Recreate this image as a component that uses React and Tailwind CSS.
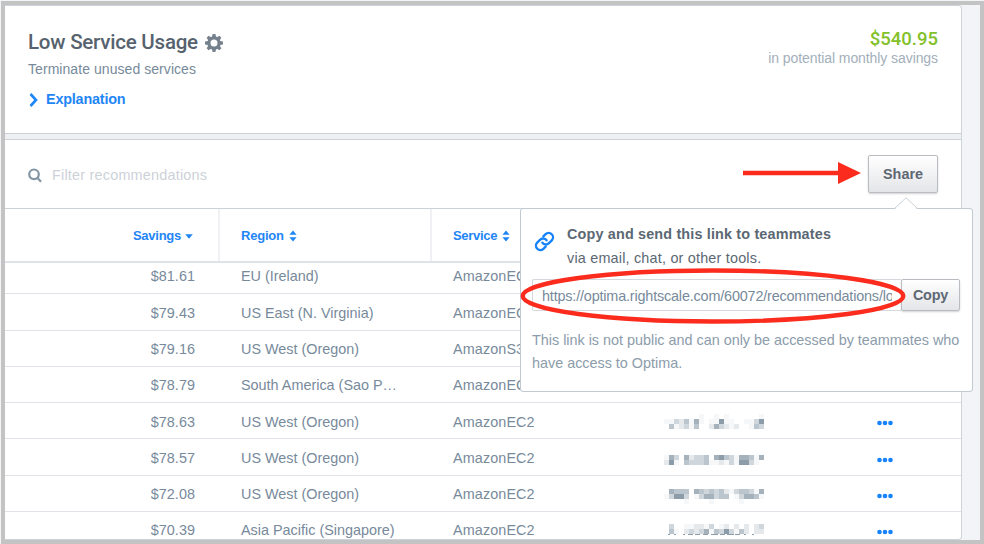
import React from "react";

const rows = [
  ["$81.61", "EU (Ireland)", "AmazonEC2"],
  ["$79.43", "US East (N. Virginia)", "AmazonEC2"],
  ["$79.16", "US West (Oregon)", "AmazonS3"],
  ["$78.79", "South America (Sao P…", "AmazonEC2"],
  ["$78.63", "US West (Oregon)", "AmazonEC2"],
  ["$78.57", "US West (Oregon)", "AmazonEC2"],
  ["$72.08", "US West (Oregon)", "AmazonEC2"],
  ["$70.39", "Asia Pacific (Singapore)", "AmazonEC2"],
];

// Redacted cells: each digit is a darkness level of one 5px block.
const mosaics = {
  4: { top: 2, grid: ["00000001001010000001", "11324151011611001136", "04123140025321200143"] },
  5: { top: 6, grid: ["15305233405643155415", "26104333411213166310"] },
  6: { top: 4, grid: ["05444054343421344315", "13663013553440135541", "00001000010000010000"] },
  7: { top: 3, grid: ["03001122130120202023", "04102323514363142022"] },
};
const shades = ["#fff", "#f5f7f8", "#e5e9ec", "#d0d7dc", "#bbc5cd", "#a5b2bc", "#8d9ca9"];
// Lower edges of the digits that remain visible under the last redaction: [x, width]
const digitFeet = [[4, 2], [10, 2], [19, 2], [24, 5], [31, 5], [39, 5], [47, 7], [56, 5], [63, 7], [71, 5], [80, 2], [88, 2]];

function Mosaic({ top, grid, feet }) {
  return (
    <svg width="100" height="20" className="block" shapeRendering="crispEdges">
      {grid.flatMap((line, y) =>
        [...line].map((v, x) =>
          v === "0" ? null : <rect key={`${x}-${y}`} x={x * 5} y={top + y * 5} width="5" height="5" fill={shades[+v]} />
        )
      )}
      {feet && digitFeet.map(([x, w]) => <rect key={x} x={x} y="13" width={w} height="1.4" fill="#8e9daa" />)}
    </svg>
  );
}

function Sort() {
  return (
    <svg width="8" height="12" viewBox="0 0 8 12" className="ml-[5px]" fill="#1f86f5">
      <path d="M4 0.5 7.6 4.8H0.4zM4 11.5 7.6 7.2H0.4z" />
    </svg>
  );
}

export default function App() {
  return (
    <div className="relative h-[544px] w-[984px] overflow-hidden bg-[#f2f4f5] pt-[1px] pl-[1px] font-['Liberation_Sans',Arial,sans-serif] text-[14.4px] text-[#778a9b]">
      <div className="h-[543px] w-[983px] overflow-hidden border-4 border-[#c3c3c3] bg-[#f3f4f7]">
        <div className="flex h-full w-[957px] flex-col overflow-hidden rounded-r-[4px] border-t border-r border-b border-[#cdd3da] bg-white">
          <header className="flex h-[127px] shrink-0 justify-between pr-[23px] pl-[23px]">
            <div>
              <div className="mt-[24px] flex h-[25px] items-center">
                <h1 className="w-[171px] font-['Roboto',sans-serif] text-[20.5px] font-medium tracking-[-0.22px] whitespace-nowrap text-[#56636e]">Low Service Usage</h1>
                <svg width="18" height="18" viewBox="-9 -9 18 18" className="ml-[6px]">
                  <circle r="5.1" fill="none" stroke="#75818c" strokeWidth="3.2" />
                  <g fill="#75818c">
                    {[0, 45, 90, 135, 180, 225, 270, 315].map((a) => (
                      <path key={a} d="M-2.1 -5.8 -1.4 -9H1.4L2.1 -5.8z" transform={`rotate(${a})`} />
                    ))}
                  </g>
                </svg>
              </div>
              <p className="mt-[4px] text-[14px] leading-[20px] tracking-[0.06px]">Terminate unused services</p>
              <div className="mt-[11px] flex h-[20px] items-center font-bold text-[#1f86f5]">
                <svg width="10" height="14" viewBox="0 0 10 14" fill="none" stroke="#1f86f5" strokeWidth="2.6">
                  <path d="M2.5 1 8 7 2.5 13" />
                </svg>
                <span className="ml-[8px] tracking-[-0.2px]">Explanation</span>
              </div>
            </div>
            <div className="text-right">
              <div className="mt-[21px] font-['Roboto',sans-serif] text-[18.5px] leading-[24px] font-medium text-[#83c12b]">$540.95</div>
              <p className="text-[14px] leading-[15px] tracking-[-0.08px] text-[#a3afbb]">in potential monthly savings</p>
            </div>
          </header>
          <div className="h-[7px] shrink-0 border-t border-b border-[#cdd1d7] bg-[#eff0f3]" />
          <div className="flex h-[69px] shrink-0 items-center border-b border-[#cbd2d9] pl-[23px]">
            <svg width="14" height="15" viewBox="0 0 14 15" className="mt-[2px]" fill="none" stroke="#8495a3" strokeWidth="2.2">
              <circle cx="6" cy="6.3" r="4.8" />
              <path d="M9.3 9.8 13 13.7" />
            </svg>
            <span className="mt-[3px] ml-[10px] tracking-[0.22px] text-[#cdd2d8]">Filter recommendations</span>
            <svg width="118" height="24" viewBox="0 0 118 24" className="mb-[2px] ml-auto">
              <path d="M0 12H97" stroke="#fb2c1d" strokeWidth="4.4" />
              <path d="M95 1 118 12 95 23z" fill="#fb2c1d" />
            </svg>
            <button className="mr-[23px] ml-[7px] h-[38px] w-[70px] rounded-[2px] border border-[#b9bcc0] bg-linear-to-b from-white to-[#e4e5e8] pt-[1px] font-bold text-[#5d6873] shadow-[0_1px_2px_rgba(0,0,0,0.18)]">Share</button>
          </div>
          <div className="flex h-[54px] shrink-0 items-center border-b-2 border-[#dfe2e8] text-[13px] font-bold text-[#1f86f5]">
            <div className="flex h-full w-[215px] items-center justify-end border-r-2 border-[#f0f1f4] pt-[2px] pr-[25px]">
              <span className="tracking-[-0.25px]">Savings</span>
              <svg width="8" height="5" viewBox="0 0 8 5" className="ml-[4px]" fill="#1f86f5"><path d="M0.2 0.2H7.8L4 4.8z" /></svg>
            </div>
            <div className="flex h-full w-[212px] items-center border-r-2 border-[#f0f1f4] pt-[2px] pl-[21px]"><span className="tracking-[-0.2px]">Region</span><Sort /></div>
            <div className="flex h-full items-center pt-[2px] pl-[21px]"><span className="tracking-[-0.3px]">Service</span><Sort /></div>
          </div>
          <div className="-mt-[5px]">
            {rows.map(([saving, region, service], i) => (
              <div key={i} className="flex h-[36.3px] items-center border-b border-[#e0e3e8] pt-[3px]">
                <div className="w-[190px] text-right tracking-[0.05px]">{saving}</div>
                <div className="ml-[46px] w-[212px]">{region}</div>
                <div className="w-[211px] tracking-[0.1px]">{service}</div>
                <div className="w-[100px]">{mosaics[i] && <Mosaic {...mosaics[i]} feet={i === 7} />}</div>
                <svg width="16" height="6" viewBox="0 0 16 6" className="mt-[2px] ml-[113px]" fill="#1683fb">
                  <circle cx="2.5" cy="3" r="2.3" /><circle cx="8" cy="3" r="2.3" /><circle cx="13.5" cy="3" r="2.3" />
                </svg>
              </div>
            ))}
          </div>
        </div>
      </div>

      <div className="absolute top-[208px] left-[520px] h-[184px] w-[453px] rounded-[3px] border border-[#c1c9d1] bg-white pl-[11px]">
        <svg width="24" height="13" viewBox="0 0 24 13" className="absolute -top-[12px] left-[373px]">
          <path d="M1 12 12 1 23 12V13H1z" fill="#fff" />
          <path d="M0.5 11.5 12 0.8 23.5 11.5" fill="none" stroke="#c9d0d7" />
        </svg>
        <div className="flex pt-[14px] text-[#5b6873]">
          <svg width="21" height="21" viewBox="0 0 24 24" className="mt-[8px] ml-[2px]" fill="none" stroke="#1683fb" strokeWidth="2.7" strokeLinecap="round">
            <path d="M9.6 13.4a5 5 0 0 0 7.54.54l3.2-3.2a5 5 0 0 0-7.07-7.07l-2.6 2.5" />
            <path d="M14.4 10.6a5 5 0 0 0-7.54-.54l-3.2 3.2a5 5 0 0 0 7.07 7.07l2.6-2.5" />
          </svg>
          <div className="ml-[12px] leading-[23px] whitespace-nowrap">
            <div className="font-bold tracking-[0.16px]">Copy and send this link to teammates</div>
            <div className="relative top-[1px] tracking-[0.2px]">via email, chat, or other tools.</div>
          </div>
        </div>
        <div className="mt-[10px] flex">
          <div className="h-[32px] w-[369px] rounded-l-[2px] border border-r-0 border-[#d5d9de] pt-[1px] pl-[9px] leading-[31px]">
            <div className="w-[350px] overflow-hidden tracking-[-0.17px] whitespace-nowrap">https://optima.rightscale.com/60072/recommendations/lo</div>
          </div>
          <button className="h-[32px] w-[59px] rounded-[2px] border border-[#b9bcc0] bg-linear-to-b from-white to-[#e4e5e8] pt-[2px] font-bold tracking-[-0.2px] text-[#5d6873] shadow-[0_1px_2px_rgba(0,0,0,0.18)]">Copy</button>
        </div>
        <p className="mt-[18px] leading-[23px] tracking-[-0.01px] whitespace-nowrap text-[#8c9cab]">This link is not public and can only be accessed by teammates who<br />have access to Optima.</p>
      </div>

      <svg width="386" height="58" viewBox="0 0 386 58" className="absolute top-[267px] left-[520px]" fill="none" stroke="#fb2c1d" strokeWidth="4.4">
        <ellipse cx="193" cy="29" rx="190.3" ry="25.5" />
      </svg>
    </div>
  );
}
